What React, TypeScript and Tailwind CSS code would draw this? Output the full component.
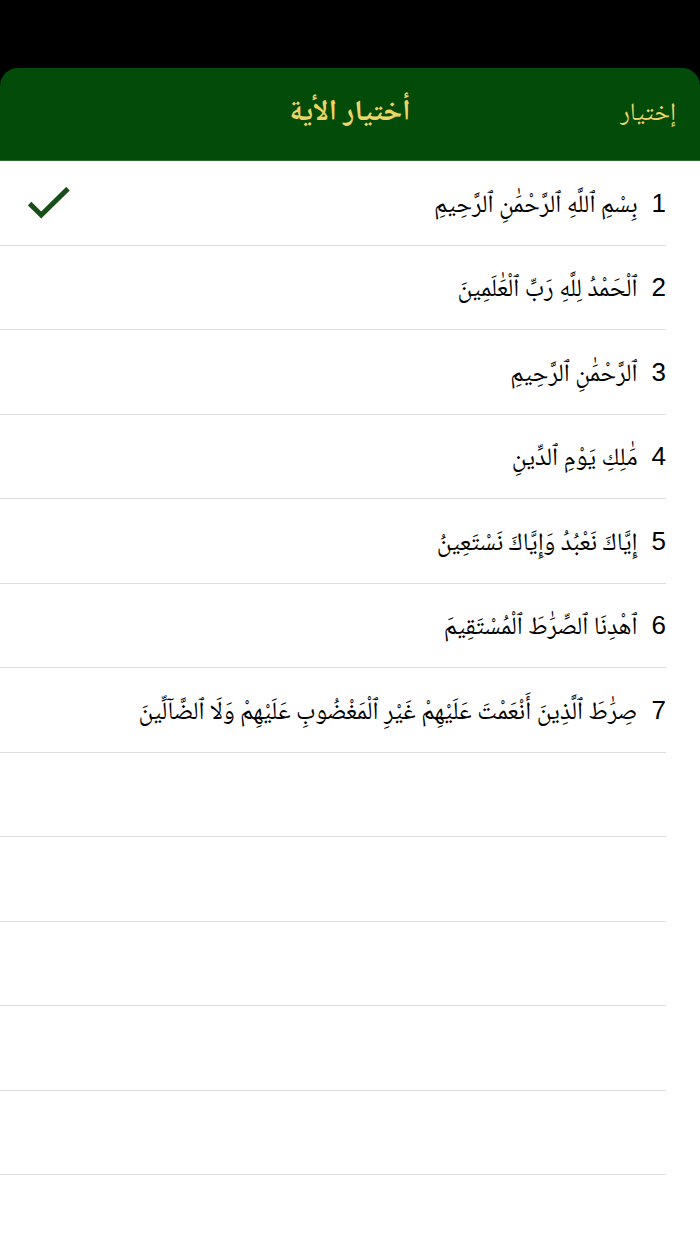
import clsx from "clsx";
import { useState } from "react";

type Verse = {
  id: number;
  text: string;
};

const verses: Verse[] = [
  { id: 1, text: "بِسْمِ ٱللَّهِ ٱلرَّحْمَٰنِ ٱلرَّحِيمِ" },
  { id: 2, text: "ٱلْحَمْدُ لِلَّهِ رَبِّ ٱلْعَٰلَمِينَ" },
  { id: 3, text: "ٱلرَّحْمَٰنِ ٱلرَّحِيمِ" },
  { id: 4, text: "مَٰلِكِ يَوْمِ ٱلدِّينِ" },
  { id: 5, text: "إِيَّاكَ نَعْبُدُ وَإِيَّاكَ نَسْتَعِينُ" },
  { id: 6, text: "ٱهْدِنَا ٱلصِّرَٰطَ ٱلْمُسْتَقِيمَ" },
  {
    id: 7,
    text: "صِرَٰطَ ٱلَّذِينَ أَنْعَمْتَ عَلَيْهِمْ غَيْرِ ٱلْمَغْضُوبِ عَلَيْهِمْ وَلَا ٱلضَّآلِّينَ",
  },
];

const emptyRows = [8, 9, 10, 11, 12];

const CheckMark = () => (
  <svg
    className="h-8 w-[42px] shrink-0"
    viewBox="0 0 42 32"
    fill="none"
    stroke="#184f18"
    strokeWidth="5"
    aria-hidden="true"
  >
    <path d="M1.6 16.6 L13.2 28 L40 1.6" />
  </svg>
);

type VerseRowProps = {
  verse: Verse;
  selected: boolean;
  onSelect: (id: number) => void;
};

const VerseRow = ({ verse, selected, onSelect }: VerseRowProps) => (
  <li className="flex border-b border-[#dedede]">
    <button
      type="button"
      aria-pressed={selected}
      onClick={() => onSelect(verse.id)}
      className="flex min-h-20 w-full items-center text-black"
    >
      <span className="flex grow items-baseline gap-3.5 pt-1">
        <span className="font-['Liberation_Sans',sans-serif] text-[26px] leading-8">
          {verse.id}
        </span>
        <span className="text-right text-[25px] leading-8">{verse.text}</span>
      </span>
      <span className={clsx("pl-7", !selected && "hidden")}>
        <CheckMark />
      </span>
    </button>
  </li>
);

const App = () => {
  const [selectedId, setSelectedId] = useState(1);

  return (
    <div
      dir="rtl"
      lang="ar"
      className="flex min-h-screen flex-col bg-black pt-[68px] font-['Noto_Naskh_Arabic','DejaVu_Sans',sans-serif]"
    >
      <header className="grid grid-cols-[1fr_auto_1fr] items-baseline rounded-t-[18px] border-b border-[#2c6b2e] bg-[#034b09] px-6 py-6 text-[#ecd466]">
        <button type="button" className="justify-self-start text-[25px] leading-8">
          إختيار
        </button>
        <h1 className="text-[29px] leading-11 font-bold">أختيار الأية</h1>
      </header>
      <main className="flex grow flex-col bg-white pr-[34px] pb-[69px]">
        <ul className="grid grow auto-rows-fr">
          {verses.map((verse) => (
            <VerseRow
              key={verse.id}
              verse={verse}
              selected={verse.id === selectedId}
              onSelect={setSelectedId}
            />
          ))}
          {emptyRows.map((row) => (
            <li
              key={row}
              aria-hidden="true"
              className="border-b border-[#dedede]"
            />
          ))}
        </ul>
      </main>
    </div>
  );
};

export default App;
